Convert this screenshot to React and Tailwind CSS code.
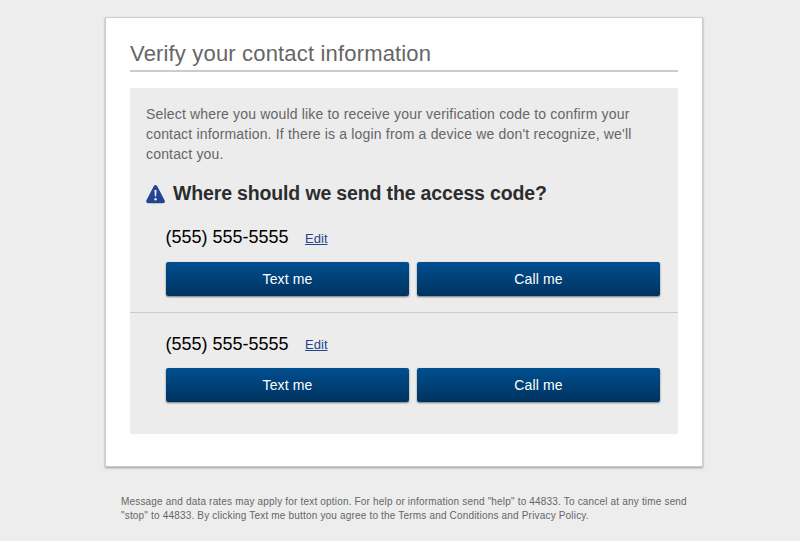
const phones = ["(555) 555-5555", "(555) 555-5555"];

function WarningIcon() {
  return (
    <svg viewBox="0 0 19 20" className="h-5 w-[19px] shrink-0">
      <path d="M9.5 3.2 16.8 17.2H2.2Z" fill="#24448e" stroke="#24448e" strokeWidth="4" strokeLinejoin="round" />
      <path d="M8.4 6h2.2l-.5 6.6H8.9Z" fill="#e8ebf4" />
      <circle cx="9.5" cy="15.3" r="1.2" fill="#e8ebf4" />
    </svg>
  );
}

function ActionButton({ children }) {
  return (
    <button className="h-[34px] w-[243px] rounded-[2px] bg-linear-to-b from-[#004f90] to-[#003360] text-[14px] tracking-[0.12px] text-white shadow-[0_1px_2px_rgba(0,0,0,0.5)]">
      {children}
    </button>
  );
}

function Contact({ phone, lowered = false }) {
  return (
    <div className="h-[106px] pl-9">
      <div className="-ml-[0.5px] flex h-10 items-baseline gap-[16.5px] pt-[3px] whitespace-nowrap">
        <span className={lowered ? "translate-y-px text-[18px] leading-6 text-black" : "text-[18px] leading-6 text-black"}>{phone}</span>
        <a href="#" className="text-[13px] text-[#24448e] underline">Edit</a>
      </div>
      <div className="flex gap-2">
        <ActionButton>Text me</ActionButton>
        <ActionButton>Call me</ActionButton>
      </div>
    </div>
  );
}

export default function App() {
  return (
    <div className="h-[541px] w-[800px] overflow-hidden bg-[#ededed] pt-[18px] pl-[106px] font-['Liberation_Sans',Arial,sans-serif]">
      <main className="h-[448px] w-[596px] bg-white px-6 pt-5 shadow-[0_0_0_1px_#cbcbcb,0_1px_2px_1px_rgba(0,0,0,0.35)]">
        <h1 className="h-[34px] border-b-2 border-[#cccccc] text-[22px] leading-[32px] tracking-[0.17px] text-[#666]">Verify your contact information</h1>
        <section className="mt-4 h-[346px] bg-[#ececec] pt-4">
          <p className="px-4 text-[14px] leading-5 tracking-[0.175px] whitespace-nowrap text-[#666]">
            Select where you would like to receive your verification code to confirm your<br />
            contact information. If there is a login from a device we don't recognize, we'll<br />
            contact you.
          </p>
          <div className="mt-[19px] flex h-[22px] items-center gap-2 pl-4">
            <WarningIcon />
            <h2 className="-mt-[2px] text-[19.5px] leading-[22px] font-bold tracking-[-0.15px] text-[#2d2d2d]">Where should we send the access code?</h2>
          </div>
          <div className="mt-[17px]">
            <Contact phone={phones[0]} />
            <div className="-mt-[16px] border-t border-[#ccc] pt-[15px]">
              <Contact phone={phones[1]} lowered />
            </div>
          </div>
        </section>
      </main>
      <p className="mt-[29px] ml-[15px] text-[10px] leading-[14px] tracking-[0.18px] whitespace-nowrap text-[#666]">
        Message and data rates may apply for text option. For help or information send "help" to 44833. To cancel at any time send<br />
        "stop" to 44833. By clicking Text me button you agree to the Terms and Conditions and Privacy Policy.
      </p>
    </div>
  );
}
